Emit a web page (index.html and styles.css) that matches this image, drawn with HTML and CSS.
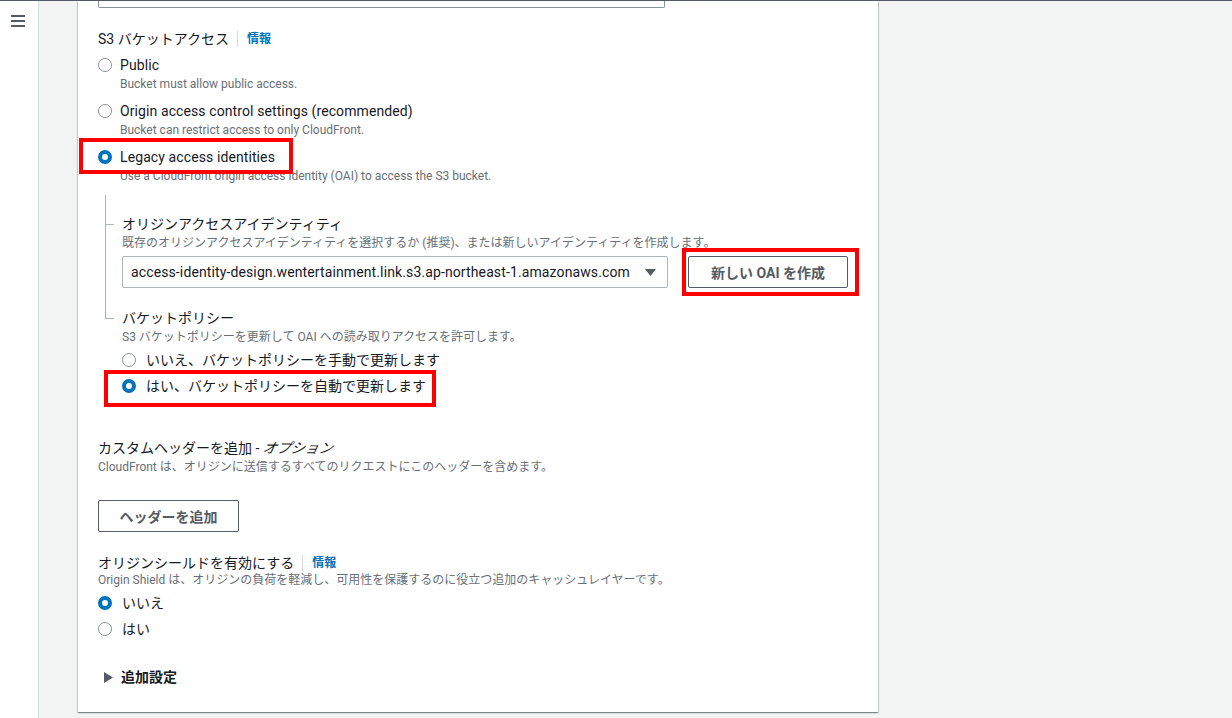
FILE: index.html
```html
<!DOCTYPE html>
<html lang="ja">
<head>
    <meta charset="UTF-8">
    <meta name="viewport" content="width=device-width, initial-scale=1.0">
    <title>CloudFront - オリジンの作成</title>
    <link rel="stylesheet" href="styles.css">
</head>
<body>
    <div class="layout">
        <nav class="sidenav">
            <button class="menu-btn" aria-label="メニュー">
                <svg width="14" height="12" viewBox="0 0 14 12">
                    <rect x="0" y="0" width="14" height="2" fill="#545b64"/>
                    <rect x="0" y="5" width="14" height="2" fill="#545b64"/>
                    <rect x="0" y="10" width="14" height="2" fill="#545b64"/>
                </svg>
            </button>
        </nav>

        <main class="content">
            <section class="card">
                <div class="cut-input"></div>

                <div class="field">
                    <div class="label-row">
                        <span class="label">S3 バケットアクセス</span>
                        <a class="info" href="#">情報</a>
                    </div>
                    <div class="radio-group">
                        <div class="radio">
                            <div class="radio-head"><span class="dot"></span><span class="radio-label">Public</span></div>
                            <div class="radio-desc">Bucket must allow public access.</div>
                        </div>
                        <div class="radio">
                            <div class="radio-head"><span class="dot"></span><span class="radio-label">Origin access control settings (recommended)</span></div>
                            <div class="radio-desc">Bucket can restrict access to only CloudFront.</div>
                        </div>
                        <div class="radio">
                            <div class="radio-head marked mark-legacy"><span class="dot checked"></span><span class="radio-label">Legacy access identities</span></div>
                            <div class="radio-desc">Use a CloudFront origin access identity (OAI) to access the S3 bucket.</div>
                        </div>
                    </div>

                    <div class="tree">
                        <div class="tree-item">
                            <div class="label">オリジンアクセスアイデンティティ</div>
                            <div class="desc">既存のオリジンアクセスアイデンティティを選択するか (推奨)、または新しいアイデンティティを作成します。</div>
                            <div class="select-row">
                                <div class="select">
                                    <span>access-identity-design.wentertainment.link.s3.ap-northeast-1.amazonaws.com</span>
                                    <svg width="11" height="7" viewBox="0 0 11 7"><path d="M0 0 L11 0 L5.5 7 Z" fill="#545b64"/></svg>
                                </div>
                                <button class="btn marked mark-oai">新しい OAI を作成</button>
                            </div>
                        </div>
                        <div class="tree-item">
                            <div class="label">バケットポリシー</div>
                            <div class="desc">S3 バケットポリシーを更新して OAI への読み取りアクセスを許可します。</div>
                            <div class="radio-group tight">
                                <div class="radio">
                                    <div class="radio-head"><span class="dot"></span><span class="radio-label jp">いいえ、バケットポリシーを手動で更新します</span></div>
                                </div>
                                <div class="radio">
                                    <div class="radio-head marked mark-policy"><span class="dot checked"></span><span class="radio-label jp">はい、バケットポリシーを自動で更新します</span></div>
                                </div>
                            </div>
                        </div>
                    </div>
                </div>

                <div class="field headers">
                    <div class="label">カスタムヘッダーを追加 - <i class="slant">オプション</i></div>
                    <div class="desc">CloudFront は、オリジンに送信するすべてのリクエストにこのヘッダーを含めます。</div>
                    <button class="btn add-btn">ヘッダーを追加</button>
                </div>

                <div class="field shield">
                    <div class="label-row">
                        <span class="label">オリジンシールドを有効にする</span>
                        <a class="info" href="#">情報</a>
                    </div>
                    <div class="desc">Origin Shield は、オリジンの負荷を軽減し、可用性を保護するのに役立つ追加のキャッシュレイヤーです。</div>
                    <div class="radio-group tight">
                        <div class="radio">
                            <div class="radio-head"><span class="dot checked"></span><span class="radio-label jp">いいえ</span></div>
                        </div>
                        <div class="radio">
                            <div class="radio-head"><span class="dot"></span><span class="radio-label jp">はい</span></div>
                        </div>
                    </div>
                </div>

                <div class="expander">
                    <svg width="9" height="11" viewBox="0 0 9 11"><path d="M0 0 L9 5.5 L0 11 Z" fill="#545b64"/></svg>
                    <span>追加設定</span>
                </div>
            </section>
        </main>
    </div>
</body>
</html>
```

FILE: styles.css
```css
html, body {
    margin: 0;
    height: 718px;
    overflow: hidden;
}
body {
    font-family: Roboto, "Noto Sans CJK JP", sans-serif;
    font-size: 14px;
    line-height: 22px;
    color: #16191f;
    background: #f2f3f3;
    border-top: 1px solid #545b64;
    box-sizing: border-box;
}
.layout {
    display: flex;
    height: 100%;
}
.sidenav {
    width: 38px;
    flex: none;
    background: #fff;
    border-right: 1px solid #d5dbdb;
}
.menu-btn {
    margin: 14px 0 0 11px;
    padding: 0;
    border: none;
    background: none;
    display: block;
}
.content {
    padding-left: 39px;
}
.card {
    width: 800px;
    background: #fff;
    padding: 0 20px 24px;
    box-sizing: border-box;
    box-shadow: 0 1px 1px 0 rgba(0, 28, 36, 0.3), 1px 1px 1px 0 rgba(0, 28, 36, 0.15), -1px 1px 1px 0 rgba(0, 28, 36, 0.15);
}
.cut-input {
    width: 565px;
    height: 6px;
    border: 1px solid #879596;
    border-top: none;
    border-radius: 0 0 2px 2px;
}
.field {
    margin-top: 20px;
}
.label-row {
    display: flex;
    align-items: center;
}
.slant {
    display: inline-block;
    transform: skewX(-12deg);
}
.info {
    font-size: 12px;
    font-weight: 700;
    color: #0073bb;
    text-decoration: none;
    line-height: 16px;
    margin-left: 8px;
    padding-left: 9px;
    border-left: 1px solid #d5dbdb;
}
.desc, .radio-desc {
    font-size: 12px;
    line-height: 16px;
    color: #687078;
}
.radio-group {
    margin-top: 4px;
    display: flex;
    flex-direction: column;
    gap: 8px;
}
.radio-group.tight {
    gap: 4px;
}
.radio-head {
    display: flex;
    align-items: center;
}
.dot {
    width: 14px;
    height: 14px;
    box-sizing: border-box;
    border: 1.5px solid #879596;
    border-radius: 50%;
    margin-right: 8px;
    flex: none;
}
.dot.checked {
    border: 4px solid #0073bb;
}
.radio-label {
    letter-spacing: 0.1px;
}
.radio-label.jp {
    margin-left: 2px;
    letter-spacing: 0;
}
.radio-desc {
    padding-left: 22px;
}

/* red annotation boxes */
.marked {
    position: relative;
    width: fit-content;
}
.marked::after {
    content: "";
    position: absolute;
    border: 4px solid #ff0000;
}
.mark-legacy::after {
    left: -19px;
    right: -18px;
    top: -8px;
    bottom: -6px;
}
.mark-oai::after {
    left: -7px;
    right: -12px;
    top: -9px;
    bottom: -9px;
}
.mark-policy::after {
    left: -18px;
    right: -10px;
    top: -5px;
    bottom: -10px;
}

.tree {
    margin: 11px 0 0 7px;
}
.tree-item {
    position: relative;
    padding: 18px 0 0 17px;
}
.tree-item::before {
    content: "";
    position: absolute;
    left: 0;
    top: 0;
    width: 8px;
    height: 29px;
    border-left: 1px solid #aab7b8;
    border-bottom: 1px solid #aab7b8;
}
.tree-item:not(:last-child)::after {
    content: "";
    position: absolute;
    left: 0;
    top: 0;
    bottom: 0;
    border-left: 1px solid #aab7b8;
}
.tree-item + .tree-item {
    padding-top: 19px;
}
.tree-item + .tree-item::before {
    height: 30px;
}
.select-row {
    display: flex;
    align-items: center;
    gap: 20px;
    margin-top: 5px;
}
.select {
    width: 546px;
    height: 32px;
    box-sizing: border-box;
    border: 1px solid #aab7b8;
    border-radius: 2px;
    padding: 0 11px 0 8px;
    display: flex;
    align-items: center;
    justify-content: space-between;
    letter-spacing: 0.12px;
}
.btn {
    font-family: inherit;
    font-size: 14px;
    font-weight: 700;
    color: #545b64;
    background: #fff;
    border: 1px solid #545b64;
    border-radius: 2px;
    height: 32px;
    padding: 0 20px;
}
.mark-oai {
    width: 160px;
}
.headers {
    margin-top: 40px;
}
.add-btn {
    display: block;
    margin-top: 25px;
    width: 141px;
}
.shield {
    margin-top: 20px;
}
.shield .desc {
    margin-top: -2px;
}
.expander {
    margin-top: 26px;
    display: flex;
    align-items: center;
    gap: 8px;
    padding-left: 6px;
    font-weight: 700;
}
```
